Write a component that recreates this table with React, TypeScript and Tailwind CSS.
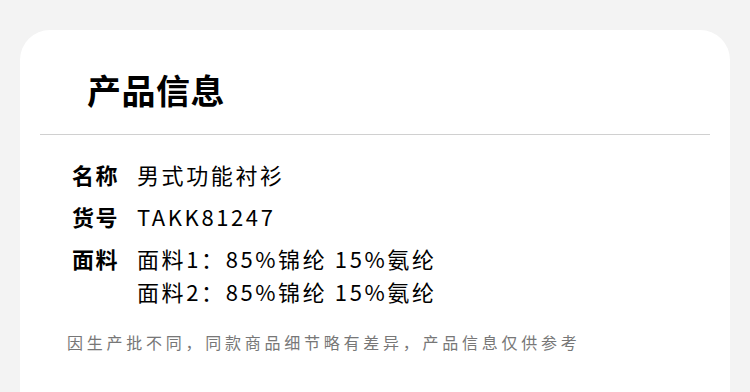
const FONT = { fontFamily: '"Noto Sans CJK SC", "Noto Sans", sans-serif' };

const ROWS: { label: string; values: string[] }[] = [
  { label: "名称", values: ["男式功能衬衫"] },
  { label: "货号", values: ["TAKK81247"] },
  { label: "面料", values: ["面料1：85%锦纶 15%氨纶", "面料2：85%锦纶 15%氨纶"] },
];

export default function App() {
  return (
    <div className="h-[392px] w-[750px] overflow-hidden bg-[#f3f3f3] pt-[30px] px-[20px]" style={FONT}>
      <div className="h-[400px] rounded-[30px] bg-white">
        <h1 className="pl-[67px] pt-[36px] text-[34px] font-bold leading-[48px] tracking-[0.5px] text-black">产品信息</h1>
        <div className="mx-[20px] mt-[20px] h-px bg-[#d0d0d0]" />
        <div className="mt-[24px] flex flex-col gap-[12px] pl-[52px]">
          {ROWS.map((row) => (
            <div key={row.label} className="flex gap-[18px]">
              <div className="text-[22px] font-bold leading-[30px] tracking-[1.5px] text-black">{row.label}</div>
              <div className="flex flex-col gap-[3px]">
                {row.values.map((v) => (
                  <div key={v} className="text-[22px] leading-[30px] tracking-[2.6px] text-black">
                    {v}
                  </div>
                ))}
              </div>
            </div>
          ))}
        </div>
        <p className="mt-[24px] pl-[47px] text-[16px] leading-[24px] tracking-[3.75px] text-[#777]">
          因生产批不同，同款商品细节略有差异，产品信息仅供参考
        </p>
      </div>
    </div>
  );
}
